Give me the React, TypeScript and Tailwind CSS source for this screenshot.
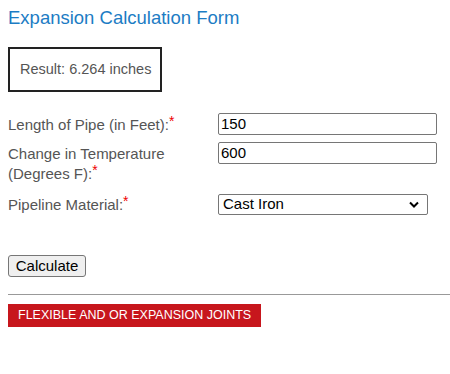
import React from "react";

function Star() {
  return <span className="relative -top-[4px] text-[#e00] text-[14px] leading-[0]">*</span>;
}

export default function App() {
  return (
    <div className="w-[450px] h-[374px] bg-white overflow-hidden font-['Liberation_Sans',Arial,sans-serif]">
      <div className="pl-[8px] pt-[7px]">
        <h2 className="text-[18.5px] leading-[22px] text-[#1c7cc4] font-normal">Expansion Calculation Form</h2>
        <div className="mt-[18px] w-[154px] h-[45px] border-2 border-[#222] flex items-center pl-[10px] text-[14.5px] text-[#555]">
          Result: 6.264 inches
        </div>

        <div className="mt-[21px] flex items-start">
          <div className="w-[210px] pt-[2px] text-[15px] leading-[20px] text-[#555]">
            Length of Pipe (in Feet):<Star />
          </div>
          <input
            readOnly
            value="150"
            className="w-[219px] h-[22px] border border-[#767676] rounded-[2px] px-[2px] text-[15px] text-black outline-none"
          />
        </div>

        <div className="mt-[7px] flex items-start">
          <div className="w-[175px] mr-[35px] pt-[2px] text-[15px] leading-[20px] text-[#555]">
            Change in Temperature (Degrees F):<Star />
          </div>
          <input
            readOnly
            value="600"
            className="w-[219px] h-[22px] border border-[#767676] rounded-[2px] px-[2px] text-[15px] text-black outline-none"
          />
        </div>

        <div className="mt-[10px] flex items-start">
          <div className="w-[210px] pt-[1px] text-[15px] leading-[20px] text-[#555]">
            Pipeline Material:<Star />
          </div>
          <div className="w-[210px] h-[21px] border border-[#767676] rounded-[2px] flex items-center justify-between pl-[4px] pr-[8px] text-[15px] text-black">
            <span>Cast Iron</span>
            <svg width="10" height="7" viewBox="0 0 10 7">
              <path d="M1 1.5 L5 5.5 L9 1.5" fill="none" stroke="#000" strokeWidth="2" />
            </svg>
          </div>
        </div>

        <button className="mt-[40px] w-[78px] h-[22px] bg-[#efefef] border border-[#767676] rounded-[3px] text-[15px] leading-[18px] text-black">
          Calculate
        </button>

        <hr className="mt-[16px] border-0 border-t border-[#999]" />

        <div className="mt-[9px] w-[253px] h-[23px] bg-[#c7161d] flex items-center pl-[10px] text-white text-[12.5px] font-normal">
          FLEXIBLE AND OR EXPANSION JOINTS
        </div>
      </div>
    </div>
  );
}
